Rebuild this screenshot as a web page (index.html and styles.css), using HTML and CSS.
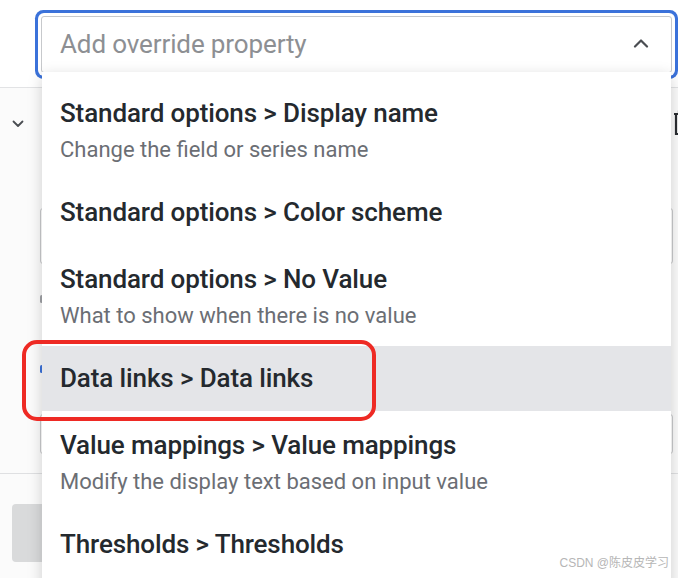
FILE: index.html
```html
<!DOCTYPE html>
<html>
<head>
<meta charset="utf-8">
<link rel="stylesheet" href="styles.css">
</head>
<body>
<div class="page">
  <div class="header">
    <div class="select">
      <span class="placeholder">Add override property</span>
      <svg class="chev-up" width="16" height="10" viewBox="0 0 16 10"><path d="M2 8.5 L8 2.5 L14 8.5" fill="none" stroke="#4a4d52" stroke-width="2.2" stroke-linecap="round" stroke-linejoin="round"/></svg>
    </div>
  </div>
  <div class="section">
    <div class="sec-head">
      <svg width="12" height="8" viewBox="0 0 12 8"><path d="M1.5 1.5 L6 6 L10.5 1.5" fill="none" stroke="#4a4d52" stroke-width="1.8" stroke-linecap="round" stroke-linejoin="round"/></svg>
      <svg class="trash" width="20" height="26" viewBox="0 0 20 26"><path d="M2 4 H18 M7 4 V1.5 H13 V4 M4 4 V24 H16 V4 M8.5 9 V19" fill="none" stroke="#2a2d31" stroke-width="2.2"/></svg>
    </div>
    <div class="field"></div>
    <div class="field-row"><span class="dot"></span></div>
    <div class="field-row blue"><span class="dot"></span></div>
    <div class="field short"></div>
  </div>
  <div class="footer">
    <div class="btn"></div>
  </div>

  <div class="menu">
    <div class="item two">
      <div class="title">Standard options &gt; Display name</div>
      <div class="desc">Change the field or series name</div>
    </div>
    <div class="item">
      <div class="title">Standard options &gt; Color scheme</div>
    </div>
    <div class="item two">
      <div class="title">Standard options &gt; No Value</div>
      <div class="desc">What to show when there is no value</div>
    </div>
    <div class="item active">
      <div class="title">Data links &gt; Data links</div>
    </div>
    <div class="item two">
      <div class="title">Value mappings &gt; Value mappings</div>
      <div class="desc">Modify the display text based on input value</div>
    </div>
    <div class="item">
      <div class="title">Thresholds &gt; Thresholds</div>
    </div>
  </div>

  <div class="annot"></div>
  <div class="watermark">CSDN @陈皮皮学习</div>
</div>
</body>
</html>
```

FILE: styles.css
```css
* { box-sizing: border-box; }
html, body {
  margin: 0;
  padding: 0;
  background: #ffffff;
}
body {
  width: 678px;
  height: 578px;
  overflow: hidden;
  font-family: Roboto, "Noto Sans", "Liberation Sans", sans-serif;
}
.page {
  position: relative;
  width: 678px;
  height: 578px;
  overflow: hidden;
  background: #fbfbfb;
}
.header {
  height: 88px;
  padding: 16px 0 0 41px;
  background: #ffffff;
  border-bottom: 1px solid #e2e3e5;
}
.select {
  width: 631px;
  height: 57px;
  border: 1px solid #c7c9cc;
  border-radius: 3px;
  background: #ffffff;
  display: flex;
  align-items: center;
  justify-content: space-between;
  padding: 0 22px 0 18px;
  box-shadow: 0 0 0 3px #ffffff, 0 0 0 6px #3b72da;
}
.placeholder {
  font-size: 26px;
  letter-spacing: -0.12px;
  color: #8d8f93;
  line-height: 1;
  margin-top: -2px;
}
.chev-up { display: block; margin-top: -4px; }

.sec-head {
  display: flex;
  justify-content: space-between;
  align-items: flex-start;
  padding: 32px 0 0 12px;
  height: 120px;
}
.sec-head svg { display: block; }
.trash {
  margin-top: -10px;
  margin-right: -14px;
}
.field {
  margin-left: 40px;
  width: 633px;
  height: 56px;
  border: 1px solid #c9cacd;
  border-radius: 3px;
  background: #ffffff;
}
.field-row {
  height: 70px;
  display: flex;
  align-items: center;
  padding-left: 40px;
}
.dot {
  width: 3px;
  height: 8px;
  background: #a0a2a6;
  border-radius: 2px;
}
.field-row.blue .dot { background: #3b72da; }
.field.short {
  height: 40px;
  margin-top: 10px;
}
.footer {
  margin-top: 19px;
  border-top: 1px solid #dfe0e2;
  padding: 30px 0 0 12px;
}
.btn {
  width: 120px;
  height: 58px;
  background: #d9dadb;
  border-radius: 4px;
}

.menu {
  position: absolute;
  left: 42px;
  top: 72px;
  width: 629px;
  height: 540px;
  background: #ffffff;
  padding-top: 7px;
  box-shadow: 0 4px 14px rgba(0, 0, 0, 0.18);
  z-index: 2;
}
.item {
  padding: 16px 18px;
}
.item.two {
  padding: 18px 18px 13px;
}
.item.active {
  background: #e4e5e8;
}
.title {
  font-size: 26px;
  font-weight: 500;
  letter-spacing: -0.12px;
  line-height: 33px;
  color: #24292e;
  white-space: nowrap;
}
.desc {
  font-size: 22px;
  line-height: 35px;
  margin-top: 2px;
  color: #6b6e74;
  white-space: nowrap;
}

.annot {
  position: absolute;
  left: 22px;
  top: 340px;
  width: 354px;
  height: 81px;
  border: 4px solid #ee2a24;
  border-radius: 15px;
  z-index: 3;
}
.watermark {
  position: absolute;
  right: 9px;
  bottom: 7px;
  font-size: 12px;
  line-height: 16px;
  color: #b6b6b6;
  font-family: "Liberation Sans", "Noto Sans CJK SC", sans-serif;
  z-index: 4;
}
```
